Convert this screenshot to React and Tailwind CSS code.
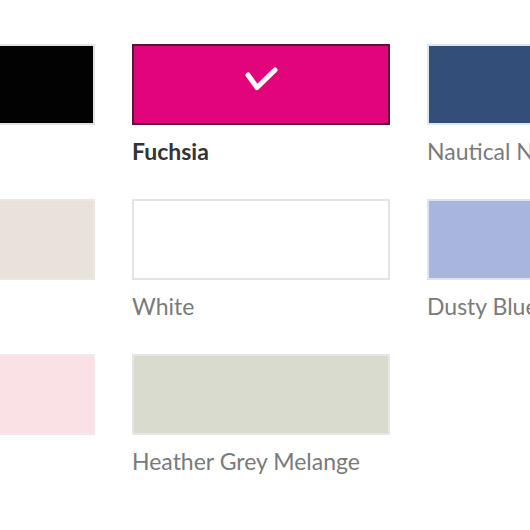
const COLOURS = [
  { name: 'Black', swatch: 'bg-[#020202] border-[#e2e2e2]' },
  { name: 'Fuchsia', swatch: 'bg-[#e2047a] border-[#5a1636]', selected: true },
  { name: 'Nautical Navy', swatch: 'bg-[#344e7a] border-[#dde6f0]' },
  { name: 'Oatmeal', swatch: 'bg-[#e9e2da] border-[#ebe8e4]' },
  { name: 'White', swatch: 'bg-white border-[#e4e4e4]' },
  { name: 'Dusty Blue', swatch: 'bg-[#a8b6dd] border-[#dde3f0]' },
  { name: 'Blush', swatch: 'bg-[#fae1e6] border-[#eeeaeb]' },
  { name: 'Heather Grey Melange', swatch: 'bg-[#d9dbcf] border-[#e6e7e2]' },
];

function Check() {
  return (
    <svg width="34" height="26" viewBox="0 0 34 26" fill="none">
      <path d="M4 9L13 21.5L31 4" stroke="white" strokeWidth="5" strokeLinecap="round" strokeLinejoin="round" />
    </svg>
  );
}

export default function App() {
  return (
    <div className="w-[530px] h-[530px] overflow-hidden bg-white font-['Lato','Open_Sans',sans-serif]">
      <div className="ml-[-163px] pt-[44px] grid grid-cols-[258px_258px_258px] gap-x-[37px]">
        {COLOURS.map(c => (
          <div key={c.name} className="h-[155px]">
            <div className={`h-[81px] border-2 flex items-center justify-center pb-[12px] ${c.swatch}`}>
              {c.selected && <Check />}
            </div>
            <div
              className={`mt-[12px] text-[23px] leading-[28px] whitespace-nowrap ${
                c.selected ? 'font-bold text-[#333333]' : 'text-[#7a7a7a]'
              }`}
            >
              {c.name}
            </div>
          </div>
        ))}
      </div>
    </div>
  );
}
